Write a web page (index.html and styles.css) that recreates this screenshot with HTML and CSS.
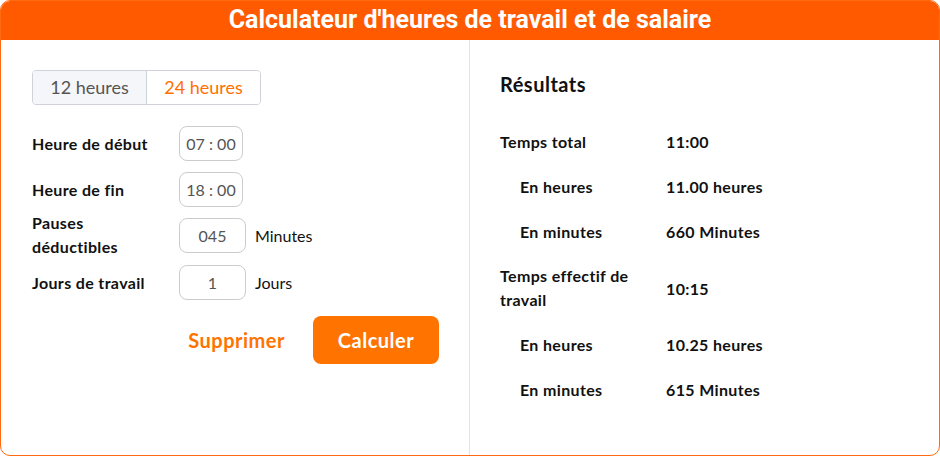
FILE: index.html
```html
<!DOCTYPE html>
<html lang="fr">
<head>
<meta charset="utf-8">
<title>Calculateur</title>
<link rel="stylesheet" href="styles.css">
</head>
<body>
<div class="card">
  <div class="header">Calculateur d'heures de travail et de salaire</div>
  <div class="body">
    <div class="left">
      <div class="toggle">
        <div class="seg seg-off">12 heures</div>
        <div class="seg seg-on">24 heures</div>
      </div>
      <div class="row r1">
        <div class="label">Heure de début</div>
        <div class="input time">07 : 00</div>
      </div>
      <div class="row r2">
        <div class="label">Heure de fin</div>
        <div class="input time">18 : 00</div>
      </div>
      <div class="row r3">
        <div class="label">Pauses<br>déductibles</div>
        <div class="input num">045</div>
        <div class="unit">Minutes</div>
      </div>
      <div class="row r4">
        <div class="label">Jours de travail</div>
        <div class="input num">1</div>
        <div class="unit">Jours</div>
      </div>
      <div class="actions">
        <div class="btn-link">Supprimer</div>
        <div class="btn">Calculer</div>
      </div>
    </div>
    <div class="right">
      <div class="res-title">Résultats</div>
      <div class="res">
        <div class="rrow"><div class="rl">Temps total</div><div class="rv">11:00</div></div>
        <div class="rrow"><div class="rl ind">En heures</div><div class="rv">11.00 heures</div></div>
        <div class="rrow"><div class="rl ind">En minutes</div><div class="rv">660 Minutes</div></div>
        <div class="rrow"><div class="rl two">Temps effectif de<br>travail</div><div class="rv">10:15</div></div>
        <div class="rrow"><div class="rl ind">En heures</div><div class="rv">10.25 heures</div></div>
        <div class="rrow"><div class="rl ind">En minutes</div><div class="rv">615 Minutes</div></div>
      </div>
    </div>
  </div>
</div>
</body>
</html>
```

FILE: styles.css
```css
html, body {
  margin: 0;
  padding: 0;
  background: #fff;
}
body {
  font-family: "Lato", "Noto Sans", sans-serif;
  color: #111;
}
.card {
  box-sizing: border-box;
  width: 940px;
  height: 456px;
  border: 1px solid #ff6a10;
  border-radius: 10px;
  overflow: hidden;
  display: flex;
  flex-direction: column;
}
.header {
  height: 39px;
  margin: -1px -1px 0;
  padding-top: 1px;
  background: #ff5a00;
  color: #fff;
  font-family: "Roboto", "Liberation Sans", sans-serif;
  font-weight: 700;
  font-size: 25px;
  line-height: 38px;
  text-align: center;
}
.body {
  flex: 1;
  display: grid;
  grid-template-columns: 469px 1fr;
}
.left {
  border-right: 1px solid #e4e4e4;
  padding: 30px 30px 0 31px;
}
.toggle {
  display: inline-flex;
  border: 1px solid #cfd2d8;
  border-radius: 4px;
  overflow: hidden;
  height: 33px;
}
.seg {
  width: 113px;
  font-size: 18px;
  line-height: 33px;
  text-align: center;
}
.seg-off {
  background: #f5f6fa;
  color: #555;
  border-right: 1px solid #cfd2d8;
}
.seg-on {
  background: #fff;
  color: #ff7000;
}
.row {
  display: flex;
  align-items: center;
}
.r1 { margin-top: 21px; }
.r2 { margin-top: 11px; }
.r3 { margin-top: 4px; }
.r4 { margin-top: 6px; }
.label {
  width: 147px;
  font-weight: 700;
  font-size: 16px;
  letter-spacing: 0.35px;
  line-height: 24px;
  color: #111;
}
.input {
  box-sizing: border-box;
  height: 35px;
  border: 1px solid #cccccc;
  border-radius: 8px;
  font-size: 16px;
  line-height: 33px;
  color: #555;
  text-align: center;
}
.time { width: 64px; }
.num { width: 67px; }
.unit {
  margin-left: 9px;
  font-size: 16px;
  color: #111;
}
.actions {
  margin-top: 16px;
  display: flex;
  justify-content: flex-end;
  align-items: center;
  gap: 28px;
}
.btn-link {
  color: #ff7300;
  font-weight: 700;
  font-size: 20px;
  letter-spacing: 0.5px;
}
.btn {
  width: 126px;
  height: 48px;
  box-sizing: border-box;
  background: #ff7300;
  color: #fff;
  border-radius: 8px;
  font-weight: 700;
  font-size: 20px;
  letter-spacing: 0.5px;
  line-height: 48px;
  text-align: center;
}
.right {
  padding: 32px 30px 0 30px;
}
.res-title {
  font-weight: 700;
  font-size: 20px;
  letter-spacing: 0.5px;
  line-height: 24px;
  color: #111;
}
.res {
  margin-top: 23px;
}
.rrow {
  display: flex;
  align-items: center;
  padding: 10px 0;
}
.rl {
  width: 166px;
  box-sizing: border-box;
  font-weight: 700;
  font-size: 16px;
  letter-spacing: 0.35px;
  line-height: 25px;
}
.rl.two { line-height: 24px; }
.rl.ind { padding-left: 20px; }
.rv {
  font-weight: 700;
  font-size: 16px;
  letter-spacing: 0.35px;
  line-height: 25px;
}
```
